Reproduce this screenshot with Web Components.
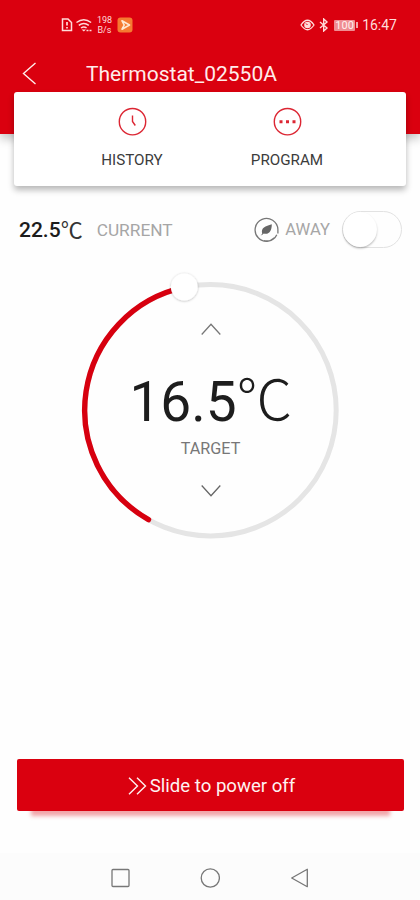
<!DOCTYPE html>
<html lang="en">
<head>
<meta charset="utf-8">
<meta name="viewport" content="width=device-width, initial-scale=1">
<title>Thermostat</title>
<style>
  html, body {
    margin: 0;
    height: 100%;
    background: #fefefe;
    overflow: hidden;
  }

  body {
    --brand: #da000f;
    font-family: Roboto, "Liberation Sans", sans-serif;
  }
</style>
</head>
<body>
<thermostat-app>
  <status-bar slot="header" time="16:47" rate="198" battery="100"></status-bar>
  <title-bar slot="header">Thermostat_02550A</title-bar>
  <action-card slot="actions">
    <action-item icon="clock">HISTORY</action-item>
    <action-item icon="dots">PROGRAM</action-item>
  </action-card>
  <current-row value="22.5">
    <toggle-switch></toggle-switch>
  </current-row>
  <temperature-dial value="16.5">TARGET</temperature-dial>
  <slide-button slot="footer">Slide to power off</slide-button>
  <nav-bar slot="footer"></nav-bar>
</thermostat-app>

<script>
/** Base class: renders template() into an open shadow root. */
class BaseElement extends HTMLElement {
  constructor() {
    super();
    this.attachShadow({ mode: "open" });
  }

  connectedCallback() {
    this.shadowRoot.innerHTML = this.template();
  }
}

/** Page frame: red header, overlapping card, content and footer. */
class ThermostatApp extends BaseElement {
  template() {
    return `
      <style>
        :host {
          display: flex;
          flex-direction: column;
          width: 420px;
          height: 900px;
          background: #fefefe;
        }
        header {
          height: 134px;
          background: var(--brand);
          box-shadow: 0 5px 9px rgba(0, 0, 0, 0.22);
        }
        .actions { margin: -42px 14px 0; }
        main { flex: 1; }
      </style>
      <header><slot name="header"></slot></header>
      <div class="actions"><slot name="actions"></slot></div>
      <main><slot></slot></main>
      <slot name="footer"></slot>
    `;
  }
}

/**
 * Phone status bar.
 * Attributes: time, rate (network speed), battery
 */
class StatusBar extends BaseElement {
  template() {
    return `
      <style>
        :host {
          display: flex;
          align-items: center;
          justify-content: space-between;
          height: 50px;
          padding: 0 23px 0 61px;
          box-sizing: border-box;
          color: #ffdcda;
        }
        .group { display: flex; align-items: center; }
        svg { display: block; }
        .rate {
          width: 17px;
          margin: 0 4px 0 2px;
          font-size: 9px;
          line-height: 10px;
          text-align: center;
        }
        .battery {
          width: 21px;
          height: 11px;
          margin-left: 5px;
          border-radius: 1px;
          background: #ef8d92;
          color: #fff0ee;
          font-size: 11px;
          line-height: 12px;
          text-align: center;
        }
        .cap { width: 2px; height: 6px; margin-left: 1px; background: #f4a5a8; }
        .time { margin-left: 4px; font-size: 14px; line-height: 20px; }
      </style>
      <div class="group">
        <svg width="33" height="16" viewBox="0 0 33 16" fill="none" stroke="currentColor" stroke-width="1.5">
          <path d="M1.5 2h5.5l3.5 3.5v8h-9z"/>
          <path d="M6 5v3.5M6 10v1.6" stroke-width="1.7"/>
          <path d="M15.5 5.5q7.3-5.5 14.6 0M17.8 8.3q5-3.8 10 0M20 11q2.8-2 5.6 0"/>
          <path d="M22.8 14.6l-2.2-2.1h4.4z" fill="currentColor" stroke="none"/>
          <path d="M25.5 13.5h5" stroke-width="1.6" stroke-dasharray="2 1"/>
        </svg>
        <div class="rate">${this.getAttribute("rate")}<br>B/s</div>
        <svg width="16" height="16" viewBox="0 0 16 16">
          <rect x="0.5" y="0.5" width="15" height="15" rx="3" fill="#f57a31"/>
          <path d="M5 3.8l7.5 4.2-7.5 4.2 2.2-4.2z" fill="none" stroke="#ffe7d2" stroke-width="1.6" stroke-linejoin="round"/>
        </svg>
      </div>
      <div class="group">
        <svg width="15" height="12" viewBox="0 0 15 12">
          <path d="M1 6Q7.5-3.5 14 6Q7.5 15.5 1 6z" fill="none" stroke="currentColor" stroke-width="1.3"/>
          <circle cx="7.5" cy="6" r="3.3" fill="currentColor"/>
          <path d="M7.5 6L6 4.5" stroke="#da000f"/>
        </svg>
        <svg width="10" height="14" viewBox="0 0 10 14" style="margin-left:4px" fill="none" stroke="currentColor" stroke-width="1.4">
          <path d="M1 4l7 6-3.3 3V1L8 4l-7 6"/>
        </svg>
        <div class="battery">${this.getAttribute("battery")}</div>
        <div class="cap"></div>
        <div class="time">${this.getAttribute("time")}</div>
      </div>
    `;
  }
}

/** Title bar with a back arrow; the slot is the device name. */
class TitleBar extends BaseElement {
  template() {
    return `
      <style>
        :host {
          display: flex;
          align-items: center;
          height: 48px;
          padding-left: 22px;
          color: #ffeceb;
          font-size: 21px;
        }
        svg { margin-right: 49px; }
      </style>
      <svg width="15" height="24" viewBox="0 0 15 24" fill="none" stroke="currentColor" stroke-width="1.4">
        <path d="M13.5 1L1.5 11.5l12 10.5"/>
      </svg>
      <slot></slot>
    `;
  }
}

/** White raised card holding action-item elements. */
class ActionCard extends BaseElement {
  template() {
    return `
      <style>
        :host {
          display: flex;
          justify-content: center;
          position: relative;
          height: 94px;
          padding-right: 1px;
          box-sizing: border-box;
          border-radius: 3px;
          background: #fff;
          box-shadow: 0 4px 6px rgba(0, 0, 0, 0.28);
        }
      </style>
      <slot></slot>
    `;
  }
}

const ACTION_ICONS = {
  clock: '<path d="M14.5 8.5v6l2.8 4" fill="none" stroke="currentColor" stroke-width="1.4"/>',
  dots: '<path d="M6.5 13.2h3v3h-3zM13 13.2h3v3h-3zM19.5 13.2h3v3h-3z" fill="currentColor"/>',
};

/**
 * Icon with a label below.
 * Attributes: icon ("clock" or "dots")
 */
class ActionItem extends BaseElement {
  template() {
    return `
      <style>
        :host {
          display: flex;
          flex-direction: column;
          align-items: center;
          width: 155px;
          padding-top: 15px;
          color: #3c3c3c;
          font-size: 15.2px;
          line-height: 20px;
        }
        svg { color: #dc2633; margin-bottom: 14px; }
      </style>
      <svg width="29" height="29" viewBox="0 0 29 29">
        <circle cx="14.5" cy="14.7" r="13.2" fill="none" stroke="currentColor" stroke-width="1.4"/>
        ${ACTION_ICONS[this.getAttribute("icon")]}
      </svg>
      <slot></slot>
    `;
  }
}

/**
 * Current temperature and away mode; the slot takes the switch.
 * Attributes: value
 */
class CurrentRow extends BaseElement {
  template() {
    return `
      <style>
        :host {
          display: flex;
          align-items: center;
          height: 40px;
          margin-top: 23px;
          padding: 0 18px 0 19px;
          color: #a6a6a6;
          font-size: 17.3px;
          line-height: 24px;
        }
        .value { padding-top: 2px; color: #1c1c1c; font-size: 21px; font-weight: 500; }
        .unit {
          width: 36px;
          padding-bottom: 3px;
          color: #333;
          font-family: "Noto Sans CJK SC", sans-serif;
          font-size: 22px;
        }
        .caption { padding-top: 1px; }
        .away {
          display: flex;
          align-items: center;
          margin-left: auto;
          margin-right: 12px;
          font-size: 16.6px;
        }
        .away svg { margin-right: 6px; }
        .away span { padding-top: 2px; }
      </style>
      <span class="value">${this.getAttribute("value")}</span><span class="unit">℃</span>
      <span class="caption">CURRENT</span>
      <span class="away">
        <svg width="25" height="25" viewBox="0 0 25 25">
          <path d="M22.8 17.8A11.4 11.4 0 1 1 23.9 12.5V16.5M20.5 20.7A11.4 11.4 0 0 1 10 23.6" fill="none" stroke="#777" stroke-width="1.3"/>
          <path d="M8.3 17C6.5 10.5 11.5 9 17.8 7.2C17.8 13.5 15.5 18 9.5 16.5z" fill="#666"/>
          <path d="M7.5 18.2l3-3.5" stroke="#666"/>
        </svg>
        <span>AWAY</span>
      </span>
      <slot></slot>
    `;
  }
}

/** Pill switch. Attributes: checked */
class ToggleSwitch extends BaseElement {
  static get observedAttributes() {
    return ["checked"];
  }

  attributeChangedCallback() {
    this.shadowRoot.innerHTML = this.template();
  }

  connectedCallback() {
    super.connectedCallback();
    this.addEventListener("click", () => this.toggleAttribute("checked"));
  }

  template() {
    return `
      <style>
        :host {
          display: flex;
          width: 60px;
          height: 37px;
          box-sizing: border-box;
          border: 1.5px solid #e2e2e2;
          border-radius: 19px;
          background: #fefefe;
        }
        :host([checked]) { justify-content: flex-end; background: var(--brand); }
        .knob {
          width: 34px;
          height: 35px;
          border-radius: 50%;
          background: #fff;
          box-shadow: 0 1.5px 2px rgba(0, 0, 0, 0.24);
        }
      </style>
      <div class="knob"></div>
    `;
  }
}

/**
 * Round temperature dial; the slot is the caption.
 * Attributes: value
 */
class TemperatureDial extends BaseElement {
  template() {
    return `
      <style>
        :host {
          display: grid;
          justify-content: center;
          margin-top: 21px;
        }
        .ring, .face { grid-area: 1 / 1; }
        .ring { width: 280px; height: 280px; }
        .face {
          display: flex;
          flex-direction: column;
          align-items: center;
          padding: 53px 0 0 1px;
        }
        .target {
          display: flex;
          height: 66px;
          margin-top: 34px;
          padding-left: 1px;
          color: #1d1d1d;
          font-size: 55px;
          line-height: 66px;
        }
        .unit {
          margin-top: -6px;
          font-family: "Noto Sans CJK SC", sans-serif;
          font-size: 56px;
          font-weight: 300;
        }
        .label {
          margin: 2px 0 24px;
          color: #777;
          font-size: 16.2px;
          line-height: 24px;
        }
      </style>
      <svg class="ring" viewBox="0 0 280 280" fill="none">
        <defs>
          <filter id="soft" x="-30%" y="-30%" width="160%" height="160%">
            <feDropShadow dx="0" dy="0.5" stdDeviation="0.9" flood-opacity="0.3"/>
          </filter>
        </defs>
        <circle cx="140.5" cy="140.3" r="125.7" stroke="#e5e5e5" stroke-width="5"/>
        <path d="M78.5 249.6A125.7 125.7 0 0 1 113.5 17.4" stroke="#d7000f" stroke-width="5.4" stroke-linecap="round"/>
        <circle cx="114.3" cy="17" r="13.4" fill="#fff" filter="url(#soft)"/>
      </svg>
      <div class="face">
        <svg width="20" height="12" viewBox="0 0 20 12" fill="none" stroke="#777" stroke-width="1.3"><path d="M0.7 11.5L10 1.3l9.3 10.2"/></svg>
        <div class="target"><span>${this.getAttribute("value")}</span><span class="unit">℃</span></div>
        <div class="label"><slot></slot></div>
        <svg width="20" height="12" viewBox="0 0 20 12" fill="none" stroke="#666" stroke-width="1.3"><path d="M0.7 0.5L10 10.7l9.3-10.2"/></svg>
      </div>
    `;
  }
}

/** Slide-to-confirm button. */
class SlideButton extends BaseElement {
  template() {
    return `
      <style>
        :host {
          display: flex;
          align-items: center;
          justify-content: center;
          height: 52px;
          margin: 0 16px 42px 17px;
          padding: 2px 0 0 2px;
          box-sizing: border-box;
          border-radius: 2px;
          background: var(--brand);
          box-shadow: 0 19px 4px -14px rgba(218, 0, 15, 0.35);
          color: #fff2f1;
          font-size: 18.6px;
        }
        svg { margin-right: 3px; }
      </style>
      <svg width="19" height="18" viewBox="0 0 19 18" fill="none" stroke="currentColor" stroke-width="1.4">
        <path d="M1 0.7l8.5 8.3L1 17.3M9 0.7l8.5 8.3L9 17.3"/>
      </svg>
      <slot></slot>
    `;
  }
}

/** System navigation: recents, home, back. */
class NavBar extends BaseElement {
  template() {
    return `
      <style>
        :host {
          display: flex;
          align-items: center;
          justify-content: center;
          gap: 70px;
          height: 47px;
          padding: 2px 0 0 0;
          box-sizing: border-box;
          background: #fcfcfc;
        }
      </style>
      <svg width="20" height="20" viewBox="0 0 20 20" fill="none" stroke="#777" stroke-width="1.3"><rect x="2" y="1.5" width="17" height="17" rx="1"/></svg>
      <svg width="20" height="20" viewBox="0 0 20 20" fill="none" stroke="#777" stroke-width="1.3"><circle cx="10.3" cy="10" r="9.1"/></svg>
      <svg width="20" height="20" viewBox="0 0 20 20" fill="none" stroke="#777" stroke-width="1.3" stroke-linejoin="round"><path d="M17.3 1.3v17.4L1.7 10z"/></svg>
    `;
  }
}

customElements.define("thermostat-app", ThermostatApp);
customElements.define("status-bar", StatusBar);
customElements.define("title-bar", TitleBar);
customElements.define("action-card", ActionCard);
customElements.define("action-item", ActionItem);
customElements.define("current-row", CurrentRow);
customElements.define("toggle-switch", ToggleSwitch);
customElements.define("temperature-dial", TemperatureDial);
customElements.define("slide-button", SlideButton);
customElements.define("nav-bar", NavBar);
</script>
</body>
</html>
